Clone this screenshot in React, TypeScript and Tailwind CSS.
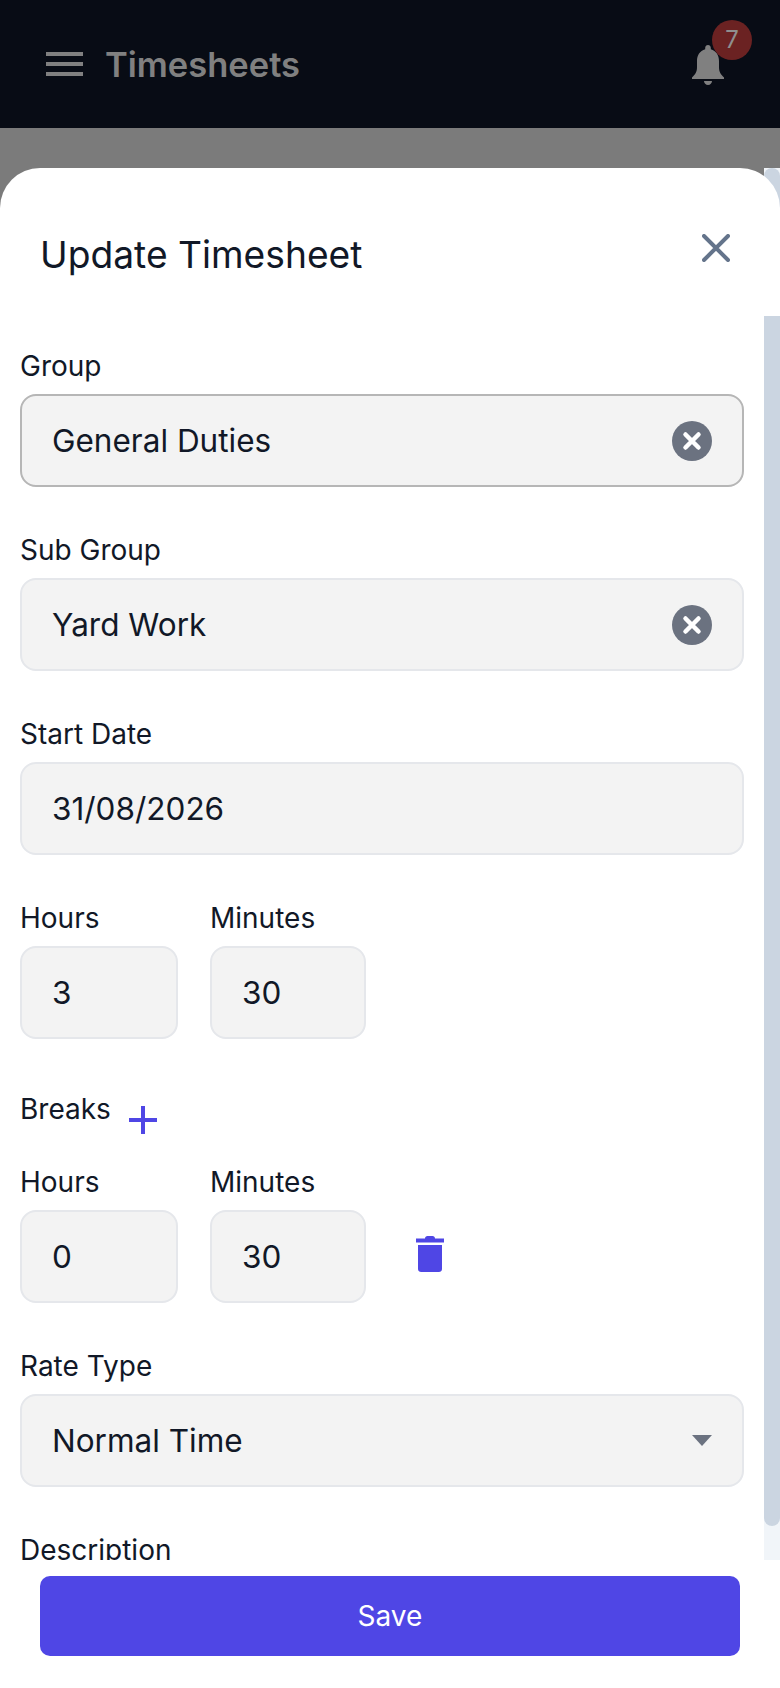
const labelClass = "h-[28px] text-[28px] leading-[28px] text-[#111827] whitespace-nowrap";
const fieldClass = "h-[93px] flex items-center rounded-[16px] border-2 bg-[#f3f3f3] pl-[30px] text-[31.5px] text-[#111827]";

const ClearIcon = () => (
  <svg width="40" height="40" viewBox="0 0 40 40" className="shrink-0">
    <circle cx="20" cy="20" r="20" fill="#6b7280" />
    <path d="M13.5 13.5 26.5 26.5M26.5 13.5 13.5 26.5" stroke="#fff" strokeWidth="4.5" strokeLinecap="round" />
  </svg>
);

const FullField = ({ label, value, focused, right }: { label: string; value: string; focused?: boolean; right?: React.ReactNode }) => (
  <div className="mb-[49px]">
    <div className={`${labelClass} mb-[14px]`}>{label}</div>
    <div className={`${fieldClass} justify-between pr-[30px] ${focused ? "border-[#b6b6b6]" : "border-[#e5e7eb]"}`}>
      <span>{value}</span>
      {right}
    </div>
  </div>
);

const SmallField = ({ label, value, width }: { label: string; value: string; width: string }) => (
  <div className={width}>
    <div className={`${labelClass} mb-[14px]`}>{label}</div>
    <div className={`${fieldClass} border-[#e5e7eb]`}>{value}</div>
  </div>
);

export default function App() {
  return (
    <div className="h-[1688px] w-[780px] flex flex-col overflow-hidden bg-[#7b7b7b] font-['Inter',sans-serif]">
      <header className="h-[128px] shrink-0 bg-[#080c15] flex items-center justify-between pl-[46px] pr-[40px]">
        <div className="flex items-center gap-[22px]">
          <svg width="37" height="24" viewBox="0 0 37 24" className="shrink-0">
            <rect y="0" width="37" height="4" fill="#808080" />
            <rect y="10" width="37" height="4" fill="#808080" />
            <rect y="20" width="37" height="4" fill="#808080" />
          </svg>
          <span className="mt-[2px] text-[34.5px] font-semibold text-[#808080]">Timesheets</span>
        </div>
        <div className="relative w-[32px] h-[40px] mt-[1px] mr-[16px]">
          <svg width="32" height="40" viewBox="0 0 32 40" className="absolute left-0 top-0">
            <path
              d="M16 0c1.6 0 2.8 1.2 2.8 3v1.2C24.200 5.600 27 10.500 27 16v6c0 5 1.500 7 5 10.500V34H0v-1.500C3.500 29 5 27 5 22v-6C5 10.500 7.800 5.600 13.200 4.200V3C13.200 1.200 14.400 0 16 0Z"
              fill="#808080"
            />
            <path d="M12 36h8c0 2.200-1.800 4-4 4s-4-1.800-4-4Z" fill="#808080" />
          </svg>
          <div className="absolute left-[20px] top-[-25px] w-[40px] h-[40px] rounded-full bg-[#6b2222] flex items-center justify-center text-[24px] text-[#8f8f8f]">
            7
          </div>
        </div>
      </header>

      <div className="h-[40px] shrink-0" />

      <div className="relative flex-1 flex flex-col">
        {/* scrollbar sits behind the sheet header */}
        <div className="absolute right-0 top-0 w-[16px] h-[1392px] bg-[#f1f5f9]">
          <div className="h-[1358px] rounded-full bg-[#cbd5e1]" />
        </div>

        <div className="relative h-[148px] shrink-0 rounded-t-[40px] bg-white flex items-start justify-between pl-[40px] pr-[50px]">
          <h2 className="mt-[65px] text-[37.2px] leading-[44px] font-normal text-[#111827]">Update Timesheet</h2>
          <svg width="28" height="28" viewBox="0 0 28 28" className="mt-[66px]">
            <path d="M2 2 26 26M26 2 2 26" stroke="#64748b" strokeWidth="4" strokeLinecap="round" />
          </svg>
        </div>

        <div className="relative h-[1244px] shrink-0 mr-[16px] bg-white overflow-hidden pt-[36px] pl-[20px] pr-[20px]">
          <FullField label="Group" value="General Duties" focused right={<ClearIcon />} />
          <FullField label="Sub Group" value="Yard Work" right={<ClearIcon />} />
          <FullField label="Start Date" value="31/08/2026" />

          <div className="flex gap-[32px] mb-[56px]">
            <SmallField label="Hours" value="3" width="w-[158px]" />
            <SmallField label="Minutes" value="30" width="w-[156px]" />
          </div>

          <div className="flex h-[73px]">
            <div className={labelClass}>Breaks</div>
            <svg width="28" height="28" viewBox="0 0 28 28" className="ml-[18px] mt-[11px]">
              <path d="M14 0V28M0 14H28" stroke="#4f46e5" strokeWidth="4" />
            </svg>
          </div>

          <div className="flex gap-[32px] mb-[49px]">
            <SmallField label="Hours" value="0" width="w-[158px]" />
            <SmallField label="Minutes" value="30" width="w-[156px]" />
            <div className="flex items-center pt-[36px] ml-[18px]">
              <svg width="28" height="36" viewBox="0 0 28 36">
                <path d="M9 2.500C9 1 10 0 11.500 0h5C18 0 19 1 19 2.500H28V6.500H0V2.500Z" fill="#4f46e5" />
                <path d="M2 9H26V33C26 34.700 24.700 36 23 36H5C3.300 36 2 34.700 2 33Z" fill="#4f46e5" />
              </svg>
            </div>
          </div>

          <FullField
            label="Rate Type"
            value="Normal Time"
            right={
              <svg width="20" height="11" viewBox="0 0 20 11">
                <path d="M0 0H20L10 11Z" fill="#6b7280" />
              </svg>
            }
          />

          <div className={labelClass}>Description</div>
        </div>

        <div className="flex-1 bg-white px-[40px] pt-[16px]">
          <button className="w-[700px] h-[80px] rounded-[10px] bg-[#4f46e5] text-[28px] text-white">Save</button>
        </div>
      </div>
    </div>
  );
}
